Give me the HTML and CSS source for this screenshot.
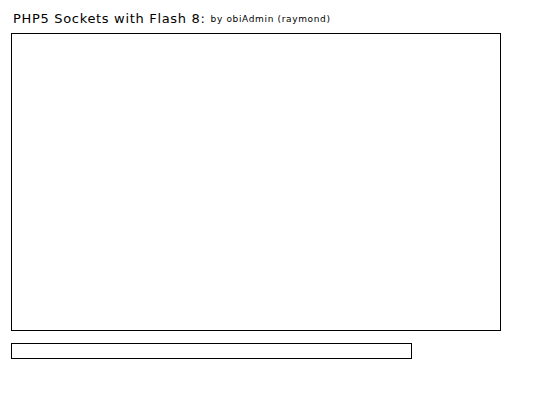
FILE: index.html
```html
<!DOCTYPE html>
<html>
<head>
<meta charset="utf-8">
<link rel="stylesheet" href="styles.css">
</head>
<body>
<div class="page">
  <div class="header">
    <span class="title">PHP5 Sockets with Flash 8:</span>
    <span class="byline">by obiAdmin (raymond)</span>
  </div>
  <div class="output"></div>
  <div class="input"></div>
</div>
</body>
</html>
```
FILE: styles.css
```css
html, body {
  margin: 0;
  padding: 0;
  background: #fff;
}
.page {
  padding: 11px 0 0 11px;
  display: flex;
  flex-direction: column;
  align-items: flex-start;
  font-family: "DejaVu Sans", Verdana, sans-serif;
  color: #000;
}
.header {
  display: flex;
  align-items: baseline;
  height: 22px;
  padding-left: 2px;
}
.title {
  font-size: 13px;
  letter-spacing: 0.68px;
}
.byline {
  font-size: 9px;
  letter-spacing: 0.65px;
  margin-left: 5px;
  position: relative;
  top: -1px;
}
.output {
  width: 488px;
  height: 296px;
  border: 1px solid #000;
}
.input {
  margin-top: 12px;
  width: 399px;
  height: 14px;
  border: 1px solid #000;
}
```
